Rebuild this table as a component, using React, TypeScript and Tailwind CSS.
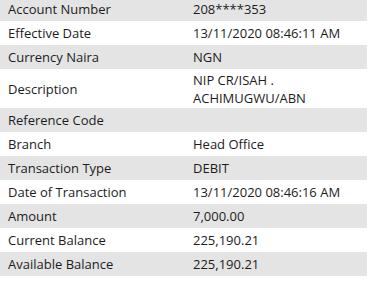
const rows: { label: string; value: string[]; gray: boolean }[] = [
  { label: "Account Number", value: ["208****353"], gray: true },
  { label: "Effective Date", value: ["13/11/2020 08:46:11 AM"], gray: false },
  { label: "Currency Naira", value: ["NGN"], gray: true },
  { label: "Description", value: ["NIP CR/ISAH .", "ACHIMUGWU/ABN"], gray: false },
  { label: "Reference Code", value: [""], gray: true },
  { label: "Branch", value: ["Head Office"], gray: false },
  { label: "Transaction Type", value: ["DEBIT"], gray: true },
  { label: "Date of Transaction", value: ["13/11/2020 08:46:16 AM"], gray: false },
  { label: "Amount", value: ["7,000.00"], gray: true },
  { label: "Current Balance", value: ["225,190.21"], gray: false },
  { label: "Available Balance", value: ["225,190.21"], gray: true },
];

const App = () => {
  return (
    <div className="w-[370px] h-[302px] bg-white text-[13px] text-[#1c1c1c] font-['Open_Sans',sans-serif]">
      <div className="w-[367px] flex flex-col">
        {rows.map((row, i) => (
          <div
            key={row.label}
            className={
              (row.gray ? "bg-[#e4e4e4] " : "bg-white ") +
              (i === 0
                ? "h-[21px] pb-[3px] "
                : row.value.length > 1
                ? "h-[39px] pt-[1px] "
                : "h-[24px] ") +
              "grid grid-cols-[186px_1fr] items-center"
            }
          >
            <span className="pl-2 leading-[18px]">{row.label}</span>
            <div className="pl-[7px] flex flex-col leading-[18px]">
              {row.value.map((v, j) => (
                <span key={j}>{v}</span>
              ))}
            </div>
          </div>
        ))}
      </div>
    </div>
  );
};

export default App;
